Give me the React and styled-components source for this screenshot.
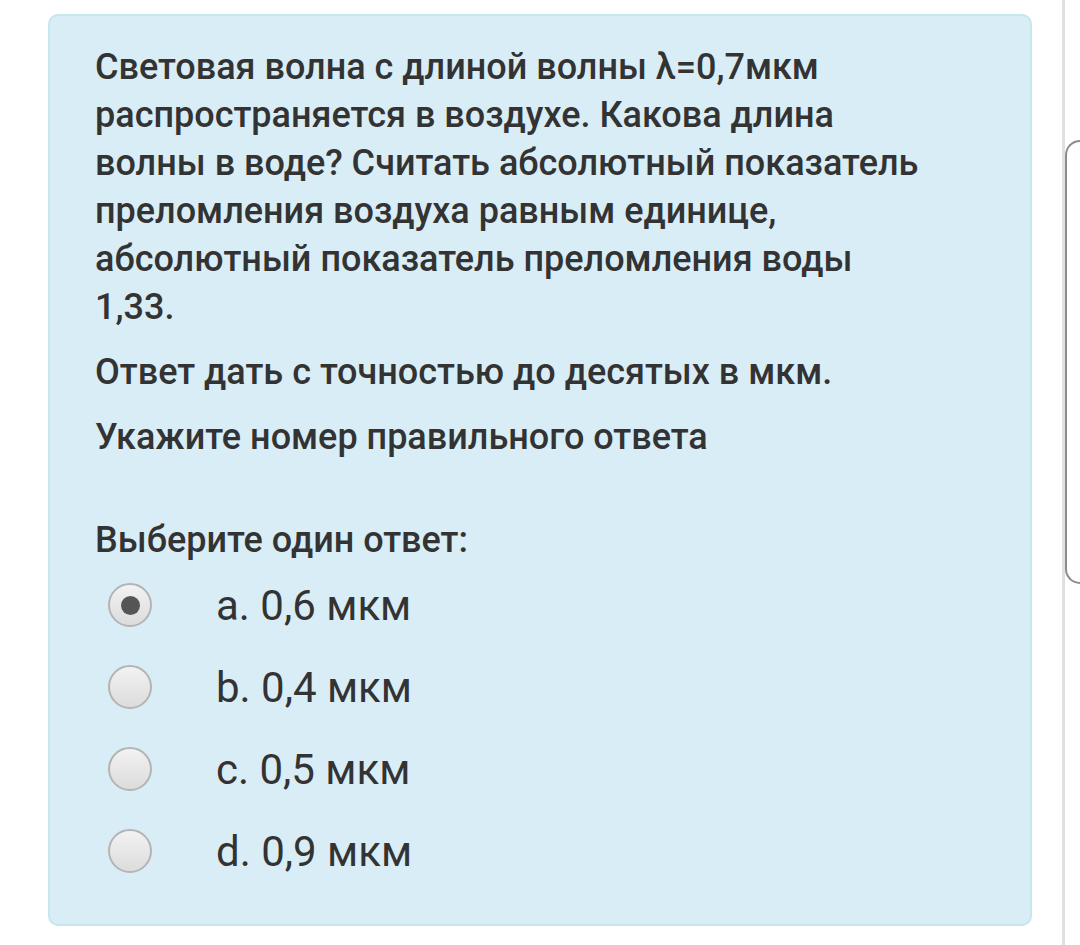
import React from 'react';
import styled, { createGlobalStyle } from 'styled-components';

const GlobalStyle = createGlobalStyle`
  html, body {
    margin: 0;
    padding: 0;
    background: #ffffff;
  }
  body {
    font-family: Roboto, "Noto Sans", sans-serif;
    color: #333333;
  }
`;

const Page = styled.div`
  display: flex;
  align-items: stretch;
  height: 945px;
  overflow: hidden;
`;

const QuestionBox = styled.div`
  box-sizing: border-box;
  margin: 14px 0 0 48px;
  width: 984px;
  height: 912px;
  padding: 27px 107px 0 45px;
  background: #d9edf7;
  border: 2px solid #c7e7ee;
  border-radius: 10px;
`;

const Paragraph = styled.p`
  margin: 0 0 ${(p) => (p.gap === undefined ? 17 : p.gap)}px 0;
  font-size: 36px;
  font-weight: 500;
  line-height: 48px;
  color: #333333;
`;

const Prompt = styled(Paragraph)`
  margin-top: 55px;
  margin-bottom: 0;
`;

const Options = styled.div`
  display: flex;
  flex-direction: column;
`;

const Option = styled.label`
  display: flex;
  align-items: center;
  height: 82px;
`;

const Radio = styled.span`
  box-sizing: border-box;
  flex: none;
  width: 44px;
  height: 44px;
  margin-left: 13px;
  border-radius: 50%;
  border: 2px solid #b4b4b4;
  background: linear-gradient(to bottom, #f2f2f2 0%, #dcdcdc 100%);
  display: flex;
  align-items: center;
  justify-content: center;

  &::after {
    content: '';
    width: 19px;
    height: 19px;
    border-radius: 50%;
    background: ${(p) => (p.checked ? '#555555' : 'transparent')};
  }
`;

const OptionText = styled.span`
  margin-left: 64px;
  font-size: 42px;
  font-weight: 400;
  white-space: nowrap;
  color: #333333;
`;

const SideStrip = styled.div`
  margin-left: 30px;
  width: 15px;
  border-left: 3px solid #e0e0e0;
  display: flex;
  flex-direction: column;
`;

const Handle = styled.div`
  margin-top: 140px;
  height: 440px;
  border: 2px solid #8c8c8c;
  border-right: none;
  border-radius: 16px 0 0 16px;
`;

const options = [
  { key: 'a', text: 'a. 0,6 мкм', checked: true },
  { key: 'b', text: 'b. 0,4 мкм' },
  { key: 'c', text: 'c. 0,5 мкм' },
  { key: 'd', text: 'd. 0,9 мкм' },
];

export default function App() {
  return (
    <>
      <GlobalStyle />
      <Page>
        <QuestionBox>
          <Paragraph>
            Световая волна с длиной волны λ=0,7мкм распространяется в воздухе. Какова длина
            волны в воде? Считать абсолютный показатель преломления воздуха равным единице,
            абсолютный показатель преломления воды 1,33.
          </Paragraph>
          <Paragraph>Ответ дать с точностью до десятых в мкм.</Paragraph>
          <Paragraph gap={0}>Укажите номер правильного ответа</Paragraph>
          <Prompt>Выберите один ответ:</Prompt>
          <Options>
            {options.map((o) => (
              <Option key={o.key}>
                <Radio checked={o.checked} />
                <OptionText>{o.text}</OptionText>
              </Option>
            ))}
          </Options>
        </QuestionBox>
        <SideStrip>
          <Handle />
        </SideStrip>
      </Page>
    </>
  );
}
